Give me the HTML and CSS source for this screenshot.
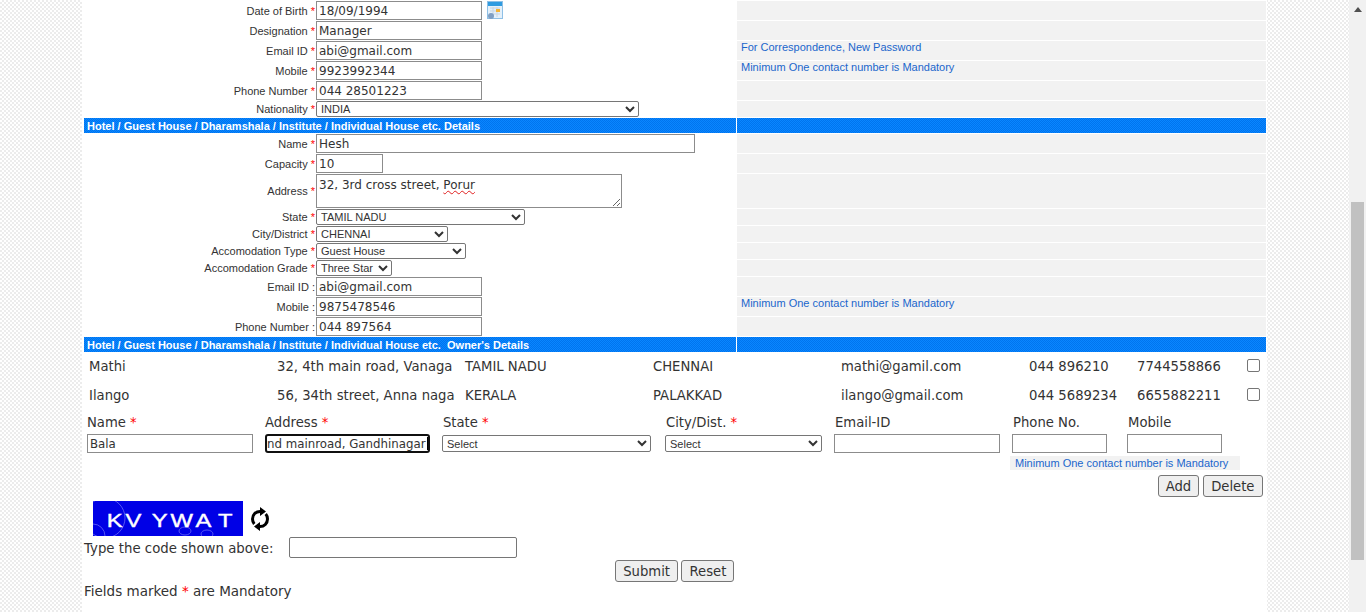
FILE: index.html
```html
<!doctype html>

<html lang="en">
  <head>
    <meta charset="utf-8">
    <title>Guest House Registration</title>
    <link rel="stylesheet" href="styles.css">
  </head>

  <body>
    <main class="page">
      <table class="form">
        <tr class="tall">
          <td class="lbl">Date of Birth <b>*</b></td>
          <td class="fld">
            <input class="txt w166" value="18/09/1994">
            <svg class="cal" width="16" height="19" viewBox="0 0 16 19">
              <rect x="0.5" y="0.5" width="15" height="17" fill="#e4f0fa" stroke="#8fc0e6"/>
              <rect x="1" y="1" width="14" height="4" fill="#2f9be0"/>
              <path d="M3 7h10M3 10h10M3 13h10M6 6v10M10 6v10" stroke="#c9d6e2"/>
              <rect x="9" y="8" width="4" height="3" fill="#f5b335"/>
              <circle cx="4" cy="15" r="3" fill="#7f9fc4"/>
            </svg>
          </td>
          <td class="note"></td>
        </tr>
        <tr class="tall">
          <td class="lbl">Designation <b>*</b></td>
          <td class="fld"><input class="txt w166" value="Manager"></td>
          <td class="note"></td>
        </tr>
        <tr class="tall">
          <td class="lbl">Email ID <b>*</b></td>
          <td class="fld"><input class="txt w166" value="abi@gmail.com"></td>
          <td class="note">For Correspondence, New Password</td>
        </tr>
        <tr class="tall">
          <td class="lbl">Mobile <b>*</b></td>
          <td class="fld"><input class="txt w166" value="9923992344"></td>
          <td class="note">Minimum One contact number is Mandatory</td>
        </tr>
        <tr class="tall">
          <td class="lbl">Phone Number <b>*</b></td>
          <td class="fld"><input class="txt w166" value="044 28501223"></td>
          <td class="note"></td>
        </tr>
        <tr class="short">
          <td class="lbl">Nationality <b>*</b></td>
          <td class="fld"><select class="sel w323"><option>INDIA</option></select></td>
          <td class="note"></td>
        </tr>
        <tr class="head">
          <td colspan="2">Hotel / Guest House / Dharamshala / Institute / Individual House etc. Details</td>
          <td></td>
        </tr>
        <tr class="tall">
          <td class="lbl">Name <b>*</b></td>
          <td class="fld"><input class="txt w379" value="Hesh"></td>
          <td class="note"></td>
        </tr>
        <tr class="tall">
          <td class="lbl">Capacity <b>*</b></td>
          <td class="fld"><input class="txt w67" value="10"></td>
          <td class="note"></td>
        </tr>
        <tr class="area">
          <td class="lbl">Address <b>*</b></td>
          <td class="fld"><div class="addr">32, 3rd cross street, <span class="typo">Porur</span></div></td>
          <td class="note"></td>
        </tr>
        <tr class="short">
          <td class="lbl">State <b>*</b></td>
          <td class="fld"><select class="sel w209"><option>TAMIL NADU</option></select></td>
          <td class="note"></td>
        </tr>
        <tr class="short">
          <td class="lbl">City/District <b>*</b></td>
          <td class="fld"><select class="sel w132"><option>CHENNAI</option></select></td>
          <td class="note"></td>
        </tr>
        <tr class="short">
          <td class="lbl">Accomodation Type <b>*</b></td>
          <td class="fld"><select class="sel w150"><option>Guest House</option></select></td>
          <td class="note"></td>
        </tr>
        <tr class="short">
          <td class="lbl">Accomodation Grade <b>*</b></td>
          <td class="fld"><select class="sel w76"><option>Three Star</option></select></td>
          <td class="note"></td>
        </tr>
        <tr class="tall">
          <td class="lbl">Email ID :</td>
          <td class="fld"><input class="txt w166" value="abi@gmail.com"></td>
          <td class="note"></td>
        </tr>
        <tr class="tall">
          <td class="lbl">Mobile :</td>
          <td class="fld"><input class="txt w166" value="9875478546"></td>
          <td class="note">Minimum One contact number is Mandatory</td>
        </tr>
        <tr class="tall">
          <td class="lbl">Phone Number :</td>
          <td class="fld"><input class="txt w166" value="044 897564"></td>
          <td class="note"></td>
        </tr>
        <tr class="head">
          <td colspan="2">Hotel / Guest House / Dharamshala / Institute / Individual House etc.&nbsp; Owner's Details</td>
          <td></td>
        </tr>
      </table>

      <div class="owner">
        <span>Mathi</span>
        <span>32, 4th main road, Vanaga</span>
        <span>TAMIL NADU</span>
        <span>CHENNAI</span>
        <span>mathi@gamil.com</span>
        <span>044 896210</span>
        <span>7744558866</span>
        <input type="checkbox" class="chk">
      </div>
      <div class="owner">
        <span>Ilango</span>
        <span>56, 34th street, Anna naga</span>
        <span>KERALA</span>
        <span>PALAKKAD</span>
        <span>ilango@gmail.com</span>
        <span>044 5689234</span>
        <span>6655882211</span>
        <input type="checkbox" class="chk">
      </div>

      <div class="add-row">
        <label>Name <b>*</b></label>
        <label>Address <b>*</b></label>
        <label>State <b>*</b></label>
        <label>City/Dist. <b>*</b></label>
        <label>Email-ID</label>
        <label>Phone No.</label>
        <label>Mobile</label>
        <input class="txt small w166" value="Bala">
        <div class="focus-wrap">
          <input class="txt small focused" value="nd mainroad, Gandhinagar">
          <span class="caret"></span>
        </div>
        <select class="sel w209 mini"><option>Select</option></select>
        <select class="sel w157 mini"><option>Select</option></select>
        <input class="txt w166">
        <input class="txt w95">
        <input class="txt w95">
      </div>

      <div class="contact-note"><span>Minimum One contact number is Mandatory</span></div>

      <div class="add-btns">
        <button class="slim">Add</button>
        <button>Delete</button>
      </div>

      <div class="captcha">
        <svg class="code" width="150" height="35" viewBox="0 0 150 35">
          <rect width="150" height="35" fill="#0000e6"/>
          <g fill="none" stroke="#6a6af5" stroke-width="0.8">
            <circle cx="12" cy="17" r="20"/>
            <circle cx="0" cy="35" r="12"/>
            <ellipse cx="92" cy="30" rx="6" ry="4"/>
            <ellipse cx="114" cy="33" rx="6" ry="4"/>
          </g>
          <text class="code-txt" transform="scale(1.25 1)" x="11 26 47 62 82 100" y="26">KVYWAT</text>
        </svg>
        <svg class="reload" width="20" height="24" viewBox="0 0 20 24">
          <path d="M11 4.5C5.5 4 2.5 8 2.5 12c0 2 .7 3.700 1.800 5" fill="none" stroke="#000" stroke-width="3"/>
          <path d="M9 19.500c5.500 .5 8.500-3.500 8.500-7.500 0-2-.7-3.700-1.800-5" fill="none" stroke="#000" stroke-width="3"/>
          <path d="M10 0l6 4.500-6 4.500zM10 24l-6-4.500 6-4.500z" fill="#000"/>
        </svg>
      </div>

      <div class="code-row">
        <label>Type the code shown above:</label>
        <input class="code-in">
      </div>

      <div class="actions">
        <button>Submit</button>
        <button>Reset</button>
      </div>

      <p class="mand">Fields marked <b>*</b> are Mandatory</p>
    </main>

    <div class="scroll">
      <i class="up"></i>
      <i class="thumb"></i>
    </div>
  </body>
</html>
```

FILE: styles.css
```css
:root {
  --main: #333;
  --line: #8c8c8c;
  --note: #1a66cc;
  --cell: #f2f2f2;
}

html, body {
  height: 100%;
  margin: 0;
  overflow: hidden;
}

body {
  display: flex;
  justify-content: space-between;
  padding-left: 82px;
  box-sizing: border-box;
  color: var(--main);
  font-family: "DejaVu Sans", Verdana, sans-serif;
  background: repeating-conic-gradient(#ececec 0 25%, #fff 0 50%) 0 0 / 4px 4px;
}

.page {
  width: 1185px;
  height: 612px;
  background: #fff;
}

b {
  color: #f00;
  font-weight: normal;
}

/* top form */
.form {
  width: 1184px;
  margin: 0 0 -1px 1px;
  table-layout: fixed;
  border-collapse: separate;
  border-spacing: 1px;
}

.form td {
  padding: 0;
  overflow: hidden;
  white-space: nowrap;
}

.form .lbl {
  width: 231px;
  text-align: right;
  font: 11px "Liberation Sans", Arial, sans-serif;
}

.form .fld {
  width: 420px;
  font-size: 0;
}

.form .note {
  width: 529px;
  padding-left: 4px;
  box-sizing: border-box;
  vertical-align: top;
  background: var(--cell);
  color: var(--note);
  font: 11px/13px "Liberation Sans", Arial, sans-serif;
}

.tall td { height: 19px; }
.short td { height: 16px; }
.area td { height: 34px; }

.form .head td {
  height: 15px;
  padding-left: 3px;
  box-sizing: border-box;
  color: #fff;
  font: bold 11px "Liberation Sans", Arial, sans-serif;
  background: repeating-conic-gradient(#0a86ff 0 25%, #0074ee 0 50%) 0 0 / 2px 2px;
}

.txt {
  display: inline-block;
  height: 19px;
  padding: 0 2px;
  box-sizing: border-box;
  border: 1px solid var(--line);
  border-radius: 0;
  color: var(--main);
  font: 12px "DejaVu Sans", Verdana, sans-serif;
  vertical-align: top;
  background: #fff;
}

.txt.small {
  font-size: 11.8px;
}

.sel {
  display: inline-block;
  height: 16px;
  padding: 0;
  box-sizing: border-box;
  border: 1px solid #767676;
  border-radius: 2px;
  color: var(--main);
  font: 11px "Liberation Sans", Arial, sans-serif;
  vertical-align: top;
  background: #fff;
}

.sel.mini {
  height: 17px;
  margin-top: 1px;
}

.w67 { width: 67px; }
.w76 { width: 76px; }
.w95 { width: 95px; }
.w132 { width: 132px; }
.w150 { width: 150px; }
.w157 { width: 157px; }
.w166 { width: 166px; }
.w209 { width: 209px; }
.w323 { width: 323px; }
.w379 { width: 379px; }

.cal {
  margin-left: 5px;
  vertical-align: top;
}

.addr {
  width: 306px;
  height: 34px;
  padding: 3px 2px;
  box-sizing: border-box;
  overflow: auto;
  resize: both;
  border: 1px solid var(--line);
  font: 12px "DejaVu Sans", Verdana, sans-serif;
}

.typo {
  text-decoration: underline wavy #e02020 1px;
}

/* owners added so far */
.owner {
  display: grid;
  grid-template-columns: repeat(5, 188px) 108px 110px auto;
  height: 29px;
  padding-left: 7px;
  align-items: center;
  font-size: 13.2px;
  white-space: nowrap;
}

.chk {
  width: 13px;
  height: 13px;
  margin: 0 0 2px 0;
  appearance: none;
  border: 1px solid #767676;
  border-radius: 2px;
  background: #fff;
}

/* new owner row */
.add-row {
  display: grid;
  grid-template-columns: 178px 177px 223px 169px 178px 115px 95px;
  padding: 5px 0 0 5px;
  row-gap: 3px;
  font-size: 13.2px;
  line-height: 16px;
}

.add-row label:nth-child(n+3) {
  padding-left: 1px;
}

.focus-wrap {
  position: relative;
  width: 165px;
}

.focused {
  width: 165px;
  padding: 0;
  border: 2px solid #101010;
  border-radius: 3px;
  outline: none;
}

.caret {
  position: absolute;
  top: 3px;
  right: 2px;
  width: 1px;
  height: 13px;
  background: #000;
}

.contact-note {
  margin: 3px 0 0 928px;
  width: 230px;
  height: 14px;
  padding-left: 5px;
  box-sizing: border-box;
  background: var(--cell);
  color: var(--note);
  font: 11px/14px "Liberation Sans", Arial, sans-serif;
}

button {
  height: 22px;
  padding: 0 7px;
  border: 1px solid #767676;
  border-radius: 3px;
  background: #efefef;
  color: var(--main);
  font: 13.2px "DejaVu Sans", Verdana, sans-serif;
}

.add-btns button {
  padding: 0 7.5px;
}

.add-btns .slim {
  padding: 0 6.5px;
}

.add-btns {
  display: flex;
  justify-content: flex-end;
  gap: 4px;
  margin: 5px 4px 0 0;
}

.captcha {
  display: flex;
  align-items: center;
  gap: 7px;
  margin: 4px 0 0 11px;
}

.code-txt {
  fill: #fff;
  stroke: #fff;
  stroke-width: 0.4;
  font: 19px "Liberation Sans", Arial, sans-serif;
}

.code-row {
  display: flex;
  align-items: center;
  gap: 16px;
  margin: 1px 0 0 2px;
  font-size: 13.3px;
}

.code-row label {
  padding-top: 2px;
}

.code-in {
  width: 228px;
  height: 21px;
  box-sizing: border-box;
  border: 1px solid #767676;
  border-radius: 2px;
}

.actions {
  display: flex;
  justify-content: center;
  gap: 3px;
  margin-top: 2px;
}

.actions button:first-child {
  padding: 0 7.5px;
}

.mand {
  margin: 1px 0 0 2px;
  font-size: 13.5px;
}

/* scrollbar */
.scroll {
  position: relative;
  width: 17px;
  height: 612px;
  background: #f1f1f1;
}

.up {
  position: absolute;
  top: 7px;
  left: 5px;
  border: 4px solid transparent;
  border-top: 0;
  border-bottom: 5px solid #505050;
}

.thumb {
  position: absolute;
  top: 202px;
  left: 2px;
  width: 13px;
  height: 358px;
  background: #c1c1c1;
}
```
